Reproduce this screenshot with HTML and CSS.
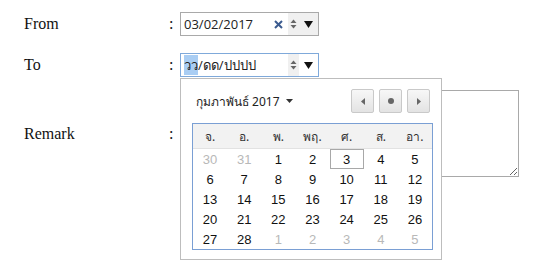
FILE: index.html
```html
<!DOCTYPE html>
<html>
<head>
<meta charset="utf-8">
<link rel="stylesheet" href="styles.css">
</head>
<body>
<div class="form">
  <div class="row row-from">
    <div class="label">From</div>
    <div class="colon">:</div>
    <div class="field">
      <div class="date-field">
        <span class="value">03/02/2017</span>
        <span class="clear">
          <svg width="9" height="9" viewBox="0 0 9 9"><path d="M1 1L8 8M8 1L1 8" stroke="#3b5b8f" stroke-width="2"/></svg>
        </span>
        <span class="spin spin-hover">
          <svg width="7" height="12" viewBox="0 0 7 12"><path d="M0.5 5L3.5 1.5L6.5 5Z" fill="#666"/><path d="M0.5 7L3.5 10.5L6.5 7Z" fill="#666"/></svg>
        </span>
        <span class="drop drop-hover">
          <svg width="9" height="7" viewBox="0 0 9 7"><path d="M0 0H9L4.5 7Z" fill="#111"/></svg>
        </span>
      </div>
    </div>
  </div>

  <div class="row row-to">
    <div class="label">To</div>
    <div class="colon">:</div>
    <div class="field picker">
      <div class="date-field focused">
        <span class="value"><span class="sel">วว</span>/ดด/ปปปป</span>
        <span class="spin">
          <svg width="7" height="12" viewBox="0 0 7 12"><path d="M0.5 5L3.5 1.5L6.5 5Z" fill="#666"/><path d="M0.5 7L3.5 10.5L6.5 7Z" fill="#666"/></svg>
        </span>
        <span class="drop">
          <svg width="9" height="7" viewBox="0 0 9 7"><path d="M0 0H9L4.5 7Z" fill="#111"/></svg>
        </span>
      </div>

      <div class="popup">
        <div class="cal-head">
          <div class="month">กุมภาพันธ์ 2017
            <svg width="7" height="4" viewBox="0 0 7 4"><path d="M0 0H7L3.5 4Z" fill="#333"/></svg>
          </div>
          <div class="navs">
            <span class="nav"><svg width="4" height="7" viewBox="0 0 4 7"><path d="M4 0V7L0 3.5Z" fill="#666"/></svg></span>
            <span class="nav"><svg width="6" height="6" viewBox="0 0 6 6"><circle cx="3" cy="3" r="3" fill="#666"/></svg></span>
            <span class="nav"><svg width="4" height="7" viewBox="0 0 4 7"><path d="M0 0V7L4 3.5Z" fill="#666"/></svg></span>
          </div>
        </div>
        <div class="cal">
          <div class="dow">
            <span>จ.</span><span>อ.</span><span>พ.</span><span>พฤ.</span><span>ศ.</span><span>ส.</span><span>อา.</span>
          </div>
          <div class="days">
            <span class="other">30</span><span class="other">31</span><span>1</span><span>2</span><span class="today">3</span><span>4</span><span>5</span>
            <span>6</span><span>7</span><span>8</span><span>9</span><span>10</span><span>11</span><span>12</span>
            <span>13</span><span>14</span><span>15</span><span>16</span><span>17</span><span>18</span><span>19</span>
            <span>20</span><span>21</span><span>22</span><span>23</span><span>24</span><span>25</span><span>26</span>
            <span>27</span><span>28</span><span class="other">1</span><span class="other">2</span><span class="other">3</span><span class="other">4</span><span class="other">5</span>
          </div>
        </div>
      </div>
    </div>
  </div>

  <div class="row row-remark">
    <div class="label">Remark</div>
    <div class="colon">:</div>
    <div class="field">
      <textarea class="remark"></textarea>
    </div>
  </div>
</div>
</body>
</html>
```

FILE: styles.css
```css
html, body {
  margin: 0;
  padding: 0;
  background: #fff;
}

body {
  min-height: 280px;
}

.form {
  padding: 12px 0 0 24px;
  min-height: 268px;
  font-family: "Liberation Serif", "Times New Roman", serif;
  font-size: 16px;
  color: #111;
}

.row {
  display: flex;
  align-items: center;
}

.row-to { margin-top: 17px; }
.row-remark { margin-top: 13px; }

.label {
  width: 145px;
  flex: none;
}

.colon {
  width: 11px;
  flex: none;
}

.field {
  flex: none;
}

.picker {
  position: relative;
  z-index: 2;
}

.date-field {
  box-sizing: border-box;
  width: 139px;
  height: 24px;
  border: 1px solid #a9a9a9;
  display: flex;
  align-items: center;
  font-family: "Open Sans", "Noto Sans", "DejaVu Sans", sans-serif;
  font-size: 13px;
  color: #222;
  background: #fff;
}

.date-field.focused {
  border-color: #7fa9da;
}

.value {
  flex: 1;
  padding-left: 3px;
  white-space: nowrap;
  line-height: 20px;
}

.sel {
  background: #a9cdf3;
  display: inline-block;
  line-height: 20px;
}

.clear {
  width: 12px;
  display: flex;
  align-items: center;
  justify-content: center;
  margin-right: 4px;
}

.spin {
  width: 11px;
  height: 22px;
  display: flex;
  align-items: center;
  justify-content: center;
  background: #f0f0f0;
}

.drop {
  width: 19px;
  height: 22px;
  display: flex;
  align-items: center;
  justify-content: center;
}

.drop-hover {
  background: #f0f0f0;
}

.popup {
  position: absolute;
  left: 0;
  top: 100%;
  margin-top: 1px;
  box-sizing: border-box;
  width: 262px;
  height: 182px;
  border: 1px solid #bdbdbd;
  background: #fff;
  padding: 10px 9px 0 11px;
}

.cal-head {
  display: flex;
  align-items: center;
  justify-content: space-between;
  height: 24px;
  padding-right: 2px;
}

.month {
  padding-left: 4px;
  font-family: "Noto Sans", "DejaVu Sans", sans-serif;
  font-size: 12px;
  color: #222;
  display: flex;
  align-items: center;
  gap: 6px;
}

.navs {
  display: flex;
  gap: 5px;
}

.nav {
  box-sizing: border-box;
  width: 23px;
  height: 24px;
  border: 1px solid #c9c9c9;
  border-radius: 2px;
  background: linear-gradient(#f7f7f7, #e3e3e3);
  display: flex;
  align-items: center;
  justify-content: center;
}

.cal {
  margin-top: 10px;
  box-sizing: border-box;
  width: 241px;
  border: 1px solid #7a9fd4;
  font-family: "Liberation Sans", Arial, sans-serif;
  font-size: 13px;
}

.dow {
  display: grid;
  grid-template-columns: repeat(7, 1fr);
  height: 24px;
  align-items: center;
  background: #f2f2f2;
  border-bottom: 1px solid #e2e2e2;
  font-family: "Noto Sans", "DejaVu Sans", sans-serif;
  font-size: 12px;
  color: #333;
  text-align: center;
}

.days {
  display: grid;
  grid-template-columns: repeat(7, 1fr);
  grid-auto-rows: 20px;
  text-align: center;
  color: #111;
}

.days span {
  display: flex;
  align-items: center;
  justify-content: center;
  box-sizing: border-box;
}

.days .other {
  color: #b8b8b8;
}

.days .today {
  border: 1px solid #a8a8a8;
}

.remark {
  display: block;
  box-sizing: border-box;
  width: 339px;
  height: 87px;
  margin: 0;
  border: 1px solid #a9a9a9;
  resize: both;
  font-family: "Liberation Sans", sans-serif;
}
```
